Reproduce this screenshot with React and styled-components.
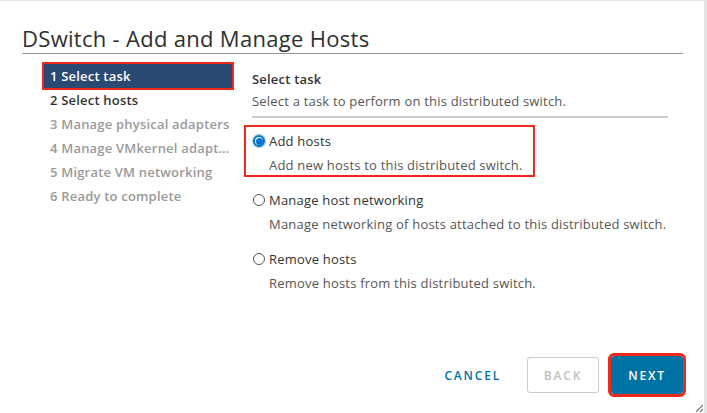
import styled, { createGlobalStyle } from "styled-components"

const GlobalStyle = createGlobalStyle`
  html, body {
    margin: 0;
    padding: 0;
    background: #fff;
  }
  body {
    font-family: "Open Sans", "Liberation Sans", sans-serif;
    color: #333;
  }
`

const Dialog = styled.div`
  width: 707px;
  height: 413px;
  box-sizing: border-box;
  border-top: 1px solid #e8e8e8;
  border-right: 3px solid #e4e4e4;
  display: flex;
  flex-direction: column;
  position: relative;
  background: #fff;
`

const Header = styled.div`
  margin: 0 21px 0 22px;
  padding-top: 23px;
  height: 29px;
  border-bottom: 1px solid #9a9a9a;
`

const Title = styled.h1`
  margin: 0;
  font-size: 22px;
  font-weight: 400;
  line-height: 28px;
  color: #2f2f2f;
  letter-spacing: 0.3px;
`

const Body = styled.div`
  flex: 1;
  display: flex;
  padding: 10px 0 0 44px;
  gap: 14px;
`

const Nav = styled.ul`
  list-style: none;
  margin: 0;
  padding: 0;
  width: 188px;
  flex-shrink: 0;
`

const NavItem = styled.li`
  height: 24px;
  line-height: 24px;
  padding-left: 6px;
  font-size: 13px;
  font-weight: 600;
  letter-spacing: 0.2px;
  white-space: nowrap;
  overflow: hidden;
  text-overflow: ellipsis;
  color: ${p => (p.$active ? "#fff" : p.$enabled ? "#333" : "#9a9a9a")};
  background: ${p => (p.$active ? "#2b4a73" : "transparent")};
  outline: ${p => (p.$active ? "2px solid #f0291a" : "none")};
`

const Content = styled.div`
  flex: 1;
  min-width: 0;
  padding-top: 5px;
  padding-right: 36px;
  letter-spacing: 0.2px;
`

const StepTitle = styled.div`
  padding-left: 6px;
  font-size: 13px;
  font-weight: 600;
  line-height: 20px;
  color: #333;
`

const StepDesc = styled.div`
  padding-left: 6px;
  margin-top: 2px;
  font-size: 13px;
  line-height: 20px;
  color: #565656;
`

const Divider = styled.div`
  margin: 5px 0 9px 6px;
  height: 2px;
  background: #cccccc;
`

const Options = styled.div`
  display: flex;
  flex-direction: column;
  align-items: flex-start;
  gap: 11px;
`

const Option = styled.label`
  display: block;
  width: fit-content;
  padding: 4px 10px 0 7px;
  height: 48px;
  box-sizing: border-box;
  outline: ${p => (p.$marked ? "2px solid #f0291a" : "none")};
`

const OptionRow = styled.div`
  display: flex;
  align-items: center;
  height: 20px;
  gap: 4px;
  font-size: 13px;
  color: #333;
`

const Radio = styled.span`
  width: 12px;
  height: 12px;
  box-sizing: border-box;
  border-radius: 50%;
  border: 1px solid #555;
  display: grid;
  place-items: center;
  ${p =>
    p.$checked &&
    `
    border: 2px solid #0079b8;
    box-shadow: 0 0 0 1px #9dc9e8;
    &::after {
      content: "";
      width: 7px;
      height: 7px;
      border-radius: 50%;
      background: #0072d6;
    }
  `}
`

const OptionDesc = styled.div`
  margin: 4px 0 0 16px;
  font-size: 13px;
  line-height: 20px;
  color: #565656;
  white-space: nowrap;
`

const Footer = styled.div`
  display: flex;
  justify-content: flex-end;
  align-items: center;
  gap: 12px;
  padding: 0 21px 19px 0;
`

const Button = styled.button`
  height: 36px;
  min-width: 72px;
  padding: 0 12px;
  box-sizing: border-box;
  border-radius: 3px;
  font-family: "Open Sans", "Liberation Sans", sans-serif;
  font-size: 12px;
  font-weight: 600;
  letter-spacing: 0.15em;
  text-transform: uppercase;
  cursor: pointer;
  border: 1px solid transparent;
  background: transparent;
  color: #0072a3;

  ${p =>
    p.$variant === "outline" &&
    `
    border-color: #cccccc;
    color: #c0c0c0;
    background: #fff;
    cursor: not-allowed;
  `}

  ${p =>
    p.$variant === "primary" &&
    `
    background: #0072a3;
    color: #fff;
    height: 38px;
    outline: 3px solid #f0291a;
    outline-offset: 0px;
  `}

  ${p => p.$variant === "flat" && `margin-right: 1px;`}
`

const ResizeGrip = styled.svg`
  position: absolute;
  right: 1px;
  bottom: 1px;
`

const steps = [
  "1 Select task",
  "2 Select hosts",
  "3 Manage physical adapters",
  "4 Manage VMkernel adapters",
  "5 Migrate VM networking",
  "6 Ready to complete",
]

const tasks = [
  { label: "Add hosts", desc: "Add new hosts to this distributed switch.", checked: true },
  { label: "Manage host networking", desc: "Manage networking of hosts attached to this distributed switch." },
  { label: "Remove hosts", desc: "Remove hosts from this distributed switch." },
]

const App = () => {
  return (
    <>
      <GlobalStyle />
      <Dialog>
        <Header>
          <Title>DSwitch - Add and Manage Hosts</Title>
        </Header>
        <Body>
          <Nav>
            {steps.map((s, i) => (
              <NavItem key={i} $active={i === 0} $enabled={i < 2}>
                {s}
              </NavItem>
            ))}
          </Nav>
          <Content>
            <StepTitle>Select task</StepTitle>
            <StepDesc>Select a task to perform on this distributed switch.</StepDesc>
            <Divider />
            <Options>
              {tasks.map((t, i) => (
                <Option key={i} $marked={t.checked}>
                  <OptionRow>
                    <Radio $checked={t.checked} />
                    {t.label}
                  </OptionRow>
                  <OptionDesc>{t.desc}</OptionDesc>
                </Option>
              ))}
            </Options>
          </Content>
        </Body>
        <Footer>
          <Button $variant="flat">Cancel</Button>
          <Button $variant="outline">Back</Button>
          <Button $variant="primary">Next</Button>
        </Footer>
        <ResizeGrip width="8" height="8" viewBox="0 0 8 8">
          <path d="M8 1 L1 8 M8 5 L5 8" stroke="#777" strokeWidth="1.2" />
        </ResizeGrip>
      </Dialog>
    </>
  )
}

export default App
